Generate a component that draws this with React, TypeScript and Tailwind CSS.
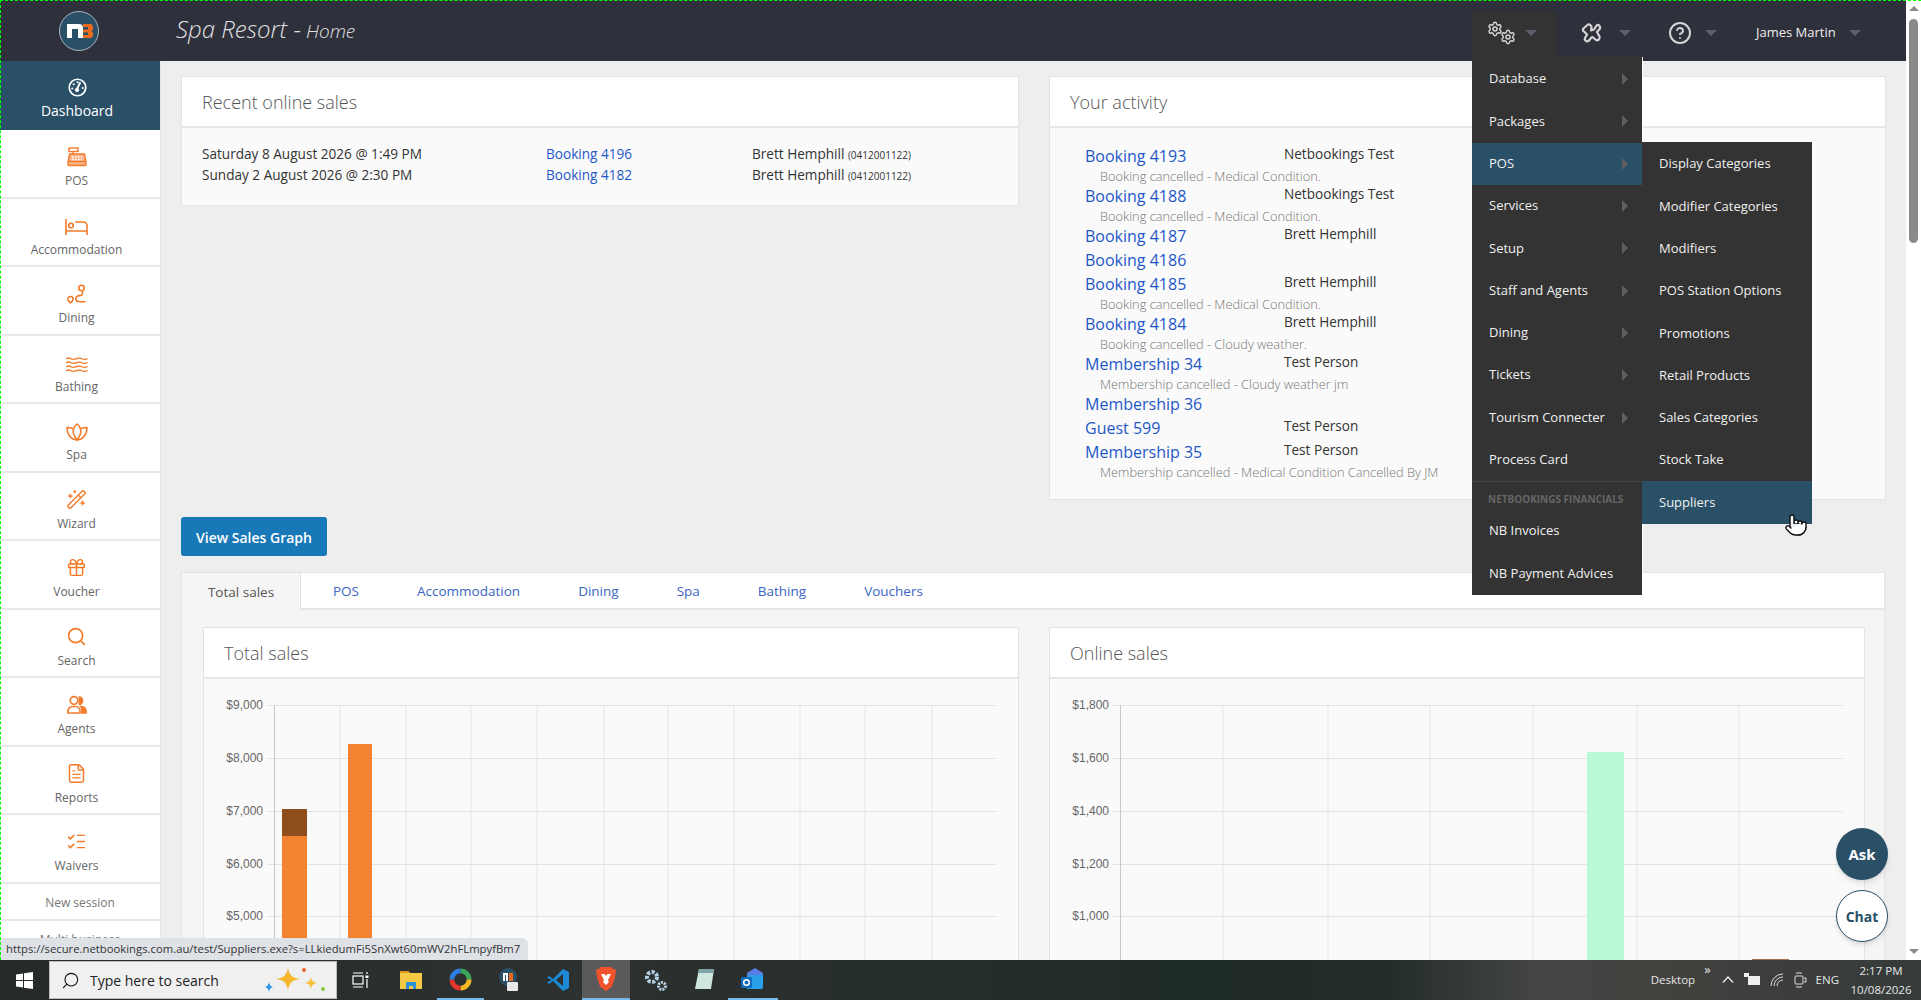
import { CircleHelp, FileText, Gift, ListChecks, Pointer, Search, Settings, WandSparkles } from 'lucide-react';
import type { ReactNode } from 'react';

const ORANGE = '#f47b2a';

const RegisterIcon = () => (
  <svg width="20" height="20" viewBox="0 0 20 20" fill="none" stroke={ORANGE} strokeWidth="1.4">
    <rect x="2" y="1" width="9" height="3.5" />
    <path d="M6 4.5V7" />
    <path d="M2.5 7h15l1.500 8v2.500a1 1 0 0 1-1 1H2a1 1 0 0 1-1-1V15z" fill="#fbb58a" />
    <path d="M1 14.500h18" />
    <path d="M5 10h10M5 12.500h10" strokeDasharray="1.500 1.500" stroke="#fff" />
  </svg>
);

const BedIcon = () => (
  <svg width="23" height="18" viewBox="0 0 23 18" fill="none" stroke={ORANGE} strokeWidth="1.600">
    <path d="M1 1v16M1 13h21M22 17V7.500A3.500 3.500 0 0 0 18.500 4H10" />
    <circle cx="6" cy="7.500" r="2.300" />
  </svg>
);

const BathIcon = () => (
  <svg width="22" height="16" viewBox="0 0 22 16" fill="none" stroke={ORANGE} strokeWidth="1.300">
    <path d="M0 2c2.700-2 3.500-1 5.500 0s3.500 0 5.500-.5 3.500-.5 5.500.5 3.500 0 5-.5" />
    <path d="M0 6c2.700-2 3.500-1 5.500 0s3.500 0 5.500-.5 3.500-.5 5.500.5 3.500 0 5-.5" />
    <path d="M0 10c2.700-2 3.500-1 5.500 0s3.500 0 5.500-.5 3.500-.5 5.500.5 3.500 0 5-.5" />
    <path d="M0 14c2.700-2 3.500-1 5.500 0s3.500 0 5.500-.5 3.500-.5 5.500.5 3.500 0 5-.5" />
  </svg>
);

const DiningIcon = () => (
  <svg width="20" height="20" viewBox="0 0 20 20" fill="none" stroke={ORANGE} strokeWidth="1.600">
    <circle cx="14.500" cy="4" r="2.700" />
    <path d="M3.500 12.500a2.700 2.700 0 0 1 2.700 2.700c0 1.200-1.500 2.600-2.700 3.600-1.200-1-2.700-2.400-2.700-3.600a2.700 2.700 0 0 1 2.700-2.700z" />
    <path d="M15 7.500c1 1.500.5 3.700-1.500 3.900-2 .2-5 1-4.700 3.500.2 1.800 1.700 2.800 3.700 2.800h6" />
  </svg>
);

const LotusIcon = () => (
  <svg width="22" height="18" viewBox="0 0 22 18" fill="none" stroke={ORANGE} strokeWidth="1.600" strokeLinejoin="round">
    <path d="M11 1c2.500 2.200 3.800 4.500 3.800 7.500 0 3-1.800 5.500-3.800 8.500-2-3-3.800-5.500-3.800-8.500C7.200 5.500 8.500 3.200 11 1z" />
    <path d="M7.400 5.700C5.200 4.800 3 4.400 1 4.500c0 6 3 12 10 12.500" />
    <path d="M14.600 5.700c2.200-.9 4.400-1.300 6.400-1.200 0 6-3 12-10 12.500" />
  </svg>
);

const AgentsIcon = () => (
  <svg width="20" height="20" viewBox="0 0 20 20" fill="none" stroke={ORANGE} strokeWidth="1.700">
    <circle cx="7" cy="5.500" r="3.800" />
    <path d="M12.500 2a3.800 3.800 0 0 1 0 7.400z" fill={ORANGE} />
    <path d="M1 18v-2a4.500 4.500 0 0 1 4.500-4.500h3A4.500 4.500 0 0 1 13 16v2z" />
    <path d="M14 11.500h.5A4.500 4.500 0 0 1 19 16v2h-4v-2.500c0-1.500-.5-2.800-1-4z" fill={ORANGE} />
  </svg>
);

const DashIcon = () => (
  <svg width="19" height="19" viewBox="0 0 20 20" fill="none" stroke="#fff">
    <circle cx="10" cy="10" r="8.700" strokeWidth="1.800" />
    <path d="M9 12.500 13 4.500" strokeWidth="2" />
    <circle cx="9.500" cy="12.500" r="1.800" fill="#fff" />
    <g fill="#fff" stroke="none">
      <circle cx="4.500" cy="11" r="1.100" />
      <circle cx="6" cy="6.500" r="1.100" />
      <circle cx="10" cy="4.500" r="1.100" />
      <circle cx="15.500" cy="10.500" r="1.100" />
    </g>
  </svg>
);

// four lobed cross next to the settings gears
const ToolsIcon = () => (
  <svg width="22" height="22" viewBox="0 0 22 22" fill="none" stroke="#d4d4d4" strokeWidth="2.200" strokeLinejoin="round">
    <path d="M3 6 7 2.500c1.500-.8 4 1.500 3.500 3.500l-.5 2.500 3-1 3-4.500c1.500-.5 3.500 1 3 3.500l-3 3.500 2.500 4.500c.8 2-1.300 4.500-3.500 3.500l-3.500-3-1 .5-3 3.500c-2 1-4.500-1-3.500-3l2-3.500-3-3C1.500 9 1.500 7 3 6z" />
  </svg>
);

const Logo = () => (
  <svg width="40" height="40" viewBox="0 0 40 40">
    <circle cx="20" cy="20" r="19.500" fill="#2a5068" stroke="#a9b4bb" />
    <path d="M8 13h12a4 4 0 0 1 4 4v10h-5V18h-6v9H8z" fill="#fff" />
    <path d="M24 13h7a3 3 0 0 1 3 3v2.500L32.500 20l1.500 1.500V24a3 3 0 0 1-3 3h-7v-3h5v-2.500h-5v-3h5V16h-5z" fill="#ea6a1f" />
  </svg>
);

const SIDE_ITEMS: { label: string; icon: ReactNode }[] = [
  { label: 'POS', icon: <RegisterIcon /> },
  { label: 'Accommodation', icon: <BedIcon /> },
  { label: 'Dining', icon: <DiningIcon /> },
  { label: 'Bathing', icon: <BathIcon /> },
  { label: 'Spa', icon: <LotusIcon /> },
  { label: 'Wizard', icon: <WandSparkles size={21} strokeWidth={1.6} color={ORANGE} /> },
  { label: 'Voucher', icon: <Gift size={21} strokeWidth={1.7} color={ORANGE} /> },
  { label: 'Search', icon: <Search size={21} strokeWidth={1.8} color={ORANGE} /> },
  { label: 'Agents', icon: <AgentsIcon /> },
  { label: 'Reports', icon: <FileText size={21} strokeWidth={1.7} color={ORANGE} /> },
  { label: 'Waivers', icon: <ListChecks size={21} strokeWidth={1.7} color={ORANGE} /> },
];

const MAIN_MENU = ['Database', 'Packages', 'POS', 'Services', 'Setup', 'Staff and Agents', 'Dining', 'Tickets', 'Tourism Connecter', 'Process Card'];
const SUB_MENU = ['Display Categories', 'Modifier Categories', 'Modifiers', 'POS Station Options', 'Promotions', 'Retail Products', 'Sales Categories', 'Stock Take', 'Suppliers'];

const ACTIVITY: { link: string; name?: string; note?: string }[] = [
  { link: 'Booking 4193', name: 'Netbookings Test', note: 'Booking cancelled - Medical Condition.' },
  { link: 'Booking 4188', name: 'Netbookings Test', note: 'Booking cancelled - Medical Condition.' },
  { link: 'Booking 4187', name: 'Brett Hemphill' },
  { link: 'Booking 4186' },
  { link: 'Booking 4185', name: 'Brett Hemphill', note: 'Booking cancelled - Medical Condition.' },
  { link: 'Booking 4184', name: 'Brett Hemphill', note: 'Booking cancelled - Cloudy weather.' },
  { link: 'Membership 34', name: 'Test Person', note: 'Membership cancelled - Cloudy weather jm' },
  { link: 'Membership 36' },
  { link: 'Guest 599', name: 'Test Person' },
  { link: 'Membership 35', name: 'Test Person', note: 'Membership cancelled - Medical Condition Cancelled By JM' },
];

const SALES = [
  { when: 'Saturday 8 August 2026 @ 1:49 PM', link: 'Booking 4196' },
  { when: 'Sunday 2 August 2026 @ 2:30 PM', link: 'Booking 4182' },
];

const TABS = ['POS', 'Accommodation', 'Dining', 'Spa', 'Bathing', 'Vouchers'];

const Caret = () => (
  <span className="inline-block w-0 h-0 border-x-[6px] border-x-transparent border-t-[6px] border-t-[#5c5e68]" />
);

const MenuRow = ({ label, active, arrow }: { label: string; active?: boolean; arrow?: boolean }) => (
  <div className={`h-[42.3px] flex items-center justify-between pl-[17px] pr-[14px] text-[13px] text-[#f0f0f0] ${active ? 'bg-[#2a5068]' : ''}`}>
    <span>{label}</span>
    {arrow && <span className="w-0 h-0 border-y-[6px] border-y-transparent border-l-[6px] border-l-[#5e5e5e]" />}
  </div>
);

const Card = ({ title, children }: { title: string; children: ReactNode }) => (
  <div className="border border-[#e3e3e3] bg-[#fafafa]">
    <div className="h-[51px] bg-white border-b-2 border-[#e6e6e6] pl-5 pt-[2px] flex items-center text-[18px] font-light text-[#555]">{title}</div>
    {children}
  </div>
);

const Chart = ({ viewBox, axis, verticals, right, ticks, children }: {
  viewBox: string; axis: number; verticals: number[]; right: number; ticks: { y: number; label: string }[]; children: ReactNode;
}) => (
  <svg width={814} height={281} viewBox={viewBox} className="block">
    {verticals.map((x) => <line key={x} x1={x} x2={x} y1={705} y2={960} stroke="#e6e6e6" />)}
    {ticks.map((t) => (
      <g key={t.y}>
        <line x1={axis - 7} x2={right} y1={t.y + 0.5} y2={t.y + 0.5} stroke="#e2e2e2" />
        <text x={axis - 11} y={t.y + 4} textAnchor="end" fontSize="12" fill="#666" fontFamily="'Liberation Sans', sans-serif">{t.label}</text>
      </g>
    ))}
    <line x1={axis + 0.5} x2={axis + 0.5} y1={705} y2={960} stroke="#c8c8c8" />
    {children}
  </svg>
);

const WindowsLogo = () => (
  <svg width="17" height="17" viewBox="0 0 17 17" fill="#fff">
    <path d="M0 2.400 7 1.400V8H0zM8 1.300 17 0v8H8zM0 9h7v6.600l-7-1zM8 9h9v8l-9-1.300z" />
  </svg>
);

const Sparkle = () => (
  <svg width="64" height="36" viewBox="0 0 64 36">
    <path d="M25 6c1.500 7 4 10 12 11-8 1-10.500 4-12 11-1.500-7-4-10-12-11 8-1 10.500-4 12-11z" fill="#f7b62b" />
    <path d="M48 15c.7 3.500 1.800 5 6 6-4.200 1-5.300 2.500-6 6-.7-3.500-1.800-5-6-6 4.200-1 5.300-2.500 6-6z" fill="#f7c23b" />
    <circle cx="41" cy="8" r="2" fill="#e8632c" />
    <circle cx="60" cy="27" r="2" fill="#8cc63f" />
    <path d="M6 20c.5 2.500 1.200 4 4 5-2.800 1-3.500 2.500-4 5-.5-2.500-1.200-4-4-5 2.800-1 3.500-2.500 4-5z" fill="#2e9be6" />
  </svg>
);

const TaskIcons = () => (
  <div className="flex items-center">
    <div className="w-[48px] flex justify-center">
      <svg width="18" height="18" viewBox="0 0 18 18" fill="none" stroke="#fff" strokeWidth="1.200">
        <rect x="1" y="5" width="10" height="8" />
        <path d="M1 2h10M1 16h10M15 1v2M15 8v9" />
        <rect x="13.500" y="4.500" width="3" height="2.500" fill="#fff" stroke="none" />
      </svg>
    </div>
    <div className="w-[52px] flex justify-center">
      <svg width="22" height="20" viewBox="0 0 22 20">
        <path d="M0 1h8l2 2h12v16H0z" fill="#f6c945" />
        <path d="M0 1h8l2 2H0z" fill="#d99a1e" />
        <path d="M6 19v-7h10v7h-3v-3H9v3z" fill="#2d8fd8" />
      </svg>
    </div>
    <div className="w-[47px] flex justify-center border-b-2 border-[#76b9ed] h-[40px] items-center">
      <svg width="23" height="23" viewBox="0 0 24 24" fill="none" strokeWidth="5">
        <path d="M12 3a9 9 0 0 1 9 9" stroke="#3ba55d" />
        <path d="M21 12a9 9 0 0 1-9 9" stroke="#f5b921" />
        <path d="M12 21a9 9 0 0 1-9-9" stroke="#e3352b" />
        <path d="M3 12a9 9 0 0 1 9-9" stroke="#2f7de1" />
      </svg>
    </div>
    <div className="w-[50px] flex justify-center">
      <svg width="20" height="24" viewBox="0 0 20 24">
        <circle cx="9" cy="9" r="9" fill="#2a5068" />
        <path d="M4 5h5v8H7V7H6v6H4z" fill="#fff" />
        <path d="M10 5h4v8h-4z" fill="#ea6a1f" />
        <rect x="8" y="14" width="11" height="9" rx="1" fill="#e8e8e8" />
      </svg>
    </div>
    <div className="w-[48px] flex justify-center">
      <svg width="24" height="24" viewBox="0 0 24 24">
        <path d="M17 1 23 4v16l-6 3L7 13l-4 3-2-1.500L5.500 12 1 9.500 3 8l4 3z" fill="#1c8ad6" />
        <path d="M17 6v12l-7-6z" fill="#2c2f2e" />
      </svg>
    </div>
    <div className="w-[48px] h-[40px] bg-[#5a5a5a] flex justify-center items-center border-b-2 border-[#76b9ed]">
      <svg width="20" height="24" viewBox="0 0 20 24">
        <path d="M5 0h10l2 2 3 .5-1 8-3 9-6 4.500-6-4.500-3-9-1-8L3 2z" fill="#f0532b" />
        <path d="M5 7h3.500L10 9l1.500-2H15l-3 6 1 2-3 3-3-3 1-2z" fill="#fff" />
      </svg>
    </div>
    <div className="w-[50px] flex justify-center">
      <svg width="26" height="24" viewBox="0 0 26 24">
        <g fill="none" stroke="#b4d0e4">
          <circle cx="10" cy="9" r="5" strokeWidth="4" strokeDasharray="3 1.500" />
          <circle cx="20" cy="18" r="3.500" strokeWidth="3" strokeDasharray="2 1" />
        </g>
      </svg>
    </div>
    <div className="w-[48px] flex justify-center">
      <svg width="22" height="24" viewBox="0 0 22 24">
        <path d="M6 1h15l-3 20H2z" fill="#cfe5e0" />
        <path d="M6 1h15l-.6 4H5.200z" fill="#7da4a6" />
      </svg>
    </div>
    <div className="w-[50px] h-[40px] flex justify-center items-center border-b-2 border-[#76b9ed]">
      <svg width="24" height="24" viewBox="0 0 24 24">
        <path d="M6 6 14 1l8 5v12H6z" fill="#5a7de8" />
        <path d="M6 8h16v12a2 2 0 0 1-2 2H6z" fill="#2aa0e8" />
        <rect x="0" y="10" width="11" height="11" rx="1.500" fill="#0f6cbd" />
        <circle cx="5.500" cy="15.500" r="2.800" fill="none" stroke="#fff" strokeWidth="1.500" />
      </svg>
    </div>
  </div>
);

const App = () => (
  <div className="relative w-full h-[1000px] overflow-hidden flex flex-col bg-[#eee] text-[#333]" style={{ fontFamily: "'Open Sans', sans-serif" }}>
    {/* capture marquee along the top and left edge */}
    <div className="absolute inset-0 z-50 pointer-events-none border-t border-l border-dashed border-[#00ff00] h-[960px]" />

    <div className="relative h-[960px] flex shrink-0">
      <div className="flex-1 min-w-0 flex flex-col">
        {/* top bar */}
        <header className="relative z-20 h-[61px] shrink-0 bg-[#2e303c] flex items-center">
          <div className="w-[160px] flex justify-center pr-[2px]"><Logo /></div>
          <div className="ml-4 italic font-light text-[#e0e0e0] flex items-baseline gap-[5px] mt-[-3px]">
            <span className="text-[24px]">Spa Resort -</span>
            <span className="text-[19px]">Home</span>
          </div>
          <div className="ml-auto mr-[40px] flex items-end self-stretch">
            <div className="relative w-[84px] h-[50px] bg-[#333] flex items-center pl-[15px] pb-[6px] gap-[8px]">
              <svg width="30" height="24" viewBox="0 0 30 24" color="#d4d4d4">
                <Settings x={0} y={0} width={16} height={16} strokeWidth={2.2} />
                <Settings x={13} y={8} width={16} height={16} strokeWidth={2.2} />
              </svg>
              <Caret />

              {/* open settings menu */}
              <div className="absolute left-0 top-[46px] w-[171px] h-[538px] bg-[#333] border-r border-white pt-px">
                {MAIN_MENU.map((label, i) => (
                  <MenuRow key={label} label={label} active={label === 'POS'} arrow={i < 9} />
                ))}
                <div className="h-[29px] border-t border-[#444] pl-4 pt-[10px] text-[10px] leading-[14px] font-bold text-[#666]">NETBOOKINGS FINANCIALS</div>
                <MenuRow label="NB Invoices" />
                <MenuRow label="NB Payment Advices" />
                <div className="absolute left-[170px] top-[85px] w-[170px] bg-[#333] pt-px">
                  {SUB_MENU.map((label) => (
                    <MenuRow key={label} label={label} active={label === 'Suppliers'} />
                  ))}
                  <Pointer size={24} strokeWidth={1.4} fill="#fff" color="#111" className="absolute left-[142px] top-[371px]" />
                </div>
              </div>
            </div>
            <div className="w-[85px] h-[50px] flex items-center pl-[25px] pb-[6px] gap-[16px]">
              <ToolsIcon />
              <Caret />
            </div>
            <div className="w-[100px] h-[50px] flex items-center pl-[27px] pb-[6px] gap-[13px]">
              <CircleHelp size={24} strokeWidth={2} color="#d4d4d4" />
              <Caret />
            </div>
            <div className="w-[125px] h-[50px] flex items-center pl-[15px] pb-[6px] gap-[13px] text-[13px] text-[#eee]">
              <span className="font-medium">James Martin</span>
              <Caret />
            </div>
          </div>
        </header>

        <div className="flex-1 min-h-0 flex">
          {/* left nav */}
          <nav className="w-[161px] shrink-0 bg-white border-r border-[#e6e2e6] overflow-hidden">
            <div className="h-[69px] bg-[#2a5068] text-white text-[14px] flex flex-col items-center pt-[17px] gap-[3px] pr-[6px]">
              <DashIcon />
              <span>Dashboard</span>
            </div>
            {SIDE_ITEMS.map((item) => (
              <div key={item.label} className="h-[68.55px] border-b-2 border-[#ebe8eb] flex flex-col items-center pr-[7px] text-[12px] text-[#666]">
                <div className="h-[40px] flex items-end justify-center pb-[3px]">{item.icon}</div>
                <span className="mt-[2px]">{item.label}</span>
              </div>
            ))}
            <div className="h-[37px] border-b-2 border-[#ebe8eb] pt-[2px] flex items-center justify-center text-[12px] text-[#777]">New session</div>
            <div className="h-[37px] flex items-center justify-center text-[12px] text-[#777]">Multi business</div>
          </nav>

          {/* page content */}
          <main className="flex-1 min-w-0 overflow-hidden pt-[15px] pl-[20px] pr-[21px]">
            <div className="grid grid-cols-[838px_837px] gap-x-[30px] items-start">
              <Card title="Recent online sales">
                <div className="pt-[15px] pb-5 pl-5 text-[13.6px]">
                  {SALES.map((s) => (
                    <div key={s.link} className="flex h-[21px] leading-[21px]">
                      <span className="w-[344px]">{s.when}</span>
                      <span className="w-[206px] text-[#1e58c8]">{s.link}</span>
                      <span>Brett Hemphill <span className="text-[10px]">(0412001122)</span></span>
                    </div>
                  ))}
                </div>
              </Card>
              <Card title="Your activity">
                <div className="pt-4 pb-[19px] pl-[35px]">
                  {ACTIVITY.map((a) => (
                    <div key={a.link}>
                      <div className="h-6 flex">
                        <span className="w-[199px] text-[16px] leading-6 text-[#1e58c8]">{a.link}</span>
                        {a.name && <span className="text-[13.6px] leading-5">{a.name}</span>}
                      </div>
                      {a.note && <div className="h-4 pl-[15px] text-[12.8px] leading-4 font-light text-[#777]">{a.note}</div>}
                    </div>
                  ))}
                </div>
              </Card>
            </div>

            <button className="mt-[17px] pt-[2px] block w-[146px] h-[39px] rounded-[3px] bg-[#1878b8] text-white text-[14px] font-semibold">View Sales Graph</button>

            <div className="mt-4 border border-[#e3e3e3] bg-[#f5f5f5]">
              <div className="h-[37px] flex bg-white border-b-2 border-[#e6e6e6] text-[13.5px]">
                <div className="w-[119px] h-[37px] pt-[2px] mr-[3px] flex items-center justify-center bg-[#f5f5f5] border-r border-[#e0e0e0] text-[#555]">Total sales</div>
                {TABS.map((t) => (
                  <div key={t} className="px-[29px] h-[37px] flex items-center text-[#3a65c4]">{t}</div>
                ))}
              </div>
              <div className="pt-[17px] pl-[21px] pr-[21px] grid grid-cols-[816px_816px] gap-x-[30px]">
                <Card title="Total sales">
                  <Chart
                    viewBox="204 679 814 281"
                    axis={274}
                    right={996}
                    verticals={[340, 406, 471, 537, 604, 668, 734, 800, 865, 932]}
                    ticks={[{ y: 705, label: '$9,000' }, { y: 758, label: '$8,000' }, { y: 811, label: '$7,000' }, { y: 864, label: '$6,000' }, { y: 916, label: '$5,000' }]}
                  >
                    <rect x="282" y="809" width="25" height="27" fill="#8e4d1b" />
                    <rect x="282" y="836" width="25" height="124" fill="#f28330" />
                    <rect x="348" y="744" width="24" height="216" fill="#f28330" />
                  </Chart>
                </Card>
                <Card title="Online sales">
                  <Chart
                    viewBox="1050 679 814 281"
                    axis={1120}
                    right={1843}
                    verticals={[1223, 1328, 1430, 1533, 1637, 1739]}
                    ticks={[{ y: 705, label: '$1,800' }, { y: 758, label: '$1,600' }, { y: 811, label: '$1,400' }, { y: 864, label: '$1,200' }, { y: 916, label: '$1,000' }]}
                  >
                    <rect x="1587" y="752" width="37" height="208" fill="#baf9d6" />
                    <rect x="1752" y="959" width="37" height="1" fill="#a07050" />
                  </Chart>
                </Card>
              </div>
            </div>
          </main>
        </div>
      </div>

      {/* browser scrollbar */}
      <div className="w-[15px] shrink-0 bg-white flex flex-col items-center relative z-20">
        <span className="mt-[6px] w-0 h-0 border-x-[5px] border-x-transparent border-b-[5px] border-b-[#8a8a8a]" />
        <div className="mt-[8px] w-[9px] h-[224px] rounded-[5px] bg-[#8a8a8a]" />
        <span className="mt-auto mb-[6px] w-0 h-0 border-x-[5px] border-x-transparent border-t-[5px] border-t-[#8a8a8a]" />
      </div>

      {/* link status bubble */}
      <div className="absolute left-0 bottom-0 z-30 h-[22px] w-[528px] bg-[#dee1e6] rounded-tr-md pl-[6px] flex items-center text-[11.3px] text-[#333] whitespace-nowrap">
        https://secure.netbookings.com.au/test/Suppliers.exe?s=LLkiedumFi5SnXwt60mWV2hFLmpyfBm7
      </div>

      {/* floating help buttons */}
      <div className="absolute right-[33px] top-[828px] z-30 flex flex-col gap-[10px]">
        <div className="w-[52px] h-[52px] rounded-full bg-[#2a5068] text-white font-bold text-[15px] flex items-center justify-center shadow-md">Ask</div>
        <div className="w-[52px] h-[52px] rounded-full bg-white border border-[#2a5068] text-[#2a5068] font-bold text-[14px] flex items-center justify-center shadow-md">Chat</div>
      </div>
    </div>

    {/* windows taskbar */}
    <footer className="relative z-40 h-[40px] shrink-0 flex items-center text-[#e6e6e6] bg-[linear-gradient(90deg,#262a2a_0%,#2d3130_30%,#1f2b29_62%,#222c2a_72%,#444545_80%,#43423f_86%,#353a3a_100%)]">
      <div className="w-[49px] flex justify-center"><WindowsLogo /></div>
      <div className="w-[288px] h-[38px] bg-[#f0f0f0] border border-[#bbb] flex items-center pl-[11px] text-[14px] text-[#222]">
        <Search size={19} strokeWidth={1.4} color="#111" className="-scale-x-100" />
        <span className="ml-[10px]">Type here to search</span>
        <div className="ml-auto mr-[9px]"><Sparkle /></div>
      </div>
      <TaskIcons />
      <div className="ml-auto flex items-center text-[11.5px] h-full">
        <span>Desktop</span>
        <span className="ml-[9px] mb-[22px] text-[13px] leading-none">»</span>
        <svg width="14" height="14" viewBox="0 0 14 14" fill="none" stroke="#eee" strokeWidth="1.300" className="ml-[10px]"><path d="M2 9.500 7 4l5 5.500" /></svg>
        <svg width="18" height="16" viewBox="0 0 18 16" className="ml-[8px]"><rect x="5" y="4" width="12" height="9" fill="#eee" /><path d="M1 1h5v4H1z" fill="#eee" /></svg>
        <svg width="16" height="16" viewBox="0 0 16 16" fill="none" stroke="#ddd" className="ml-[8px]"><path d="M2 14a12 12 0 0 1 12-12M5 14a9 9 0 0 1 9-9M8 14a6 6 0 0 1 6-6" /></svg>
        <svg width="14" height="18" viewBox="0 0 14 18" fill="none" stroke="#ddd" className="ml-[8px]"><rect x="2" y="5" width="8" height="8" rx="1" /><path d="M3 2h6M3 16h6M11 7h2v4h-2" /></svg>
        <span className="ml-[9px]">ENG</span>
        <div className="ml-[13px] mr-[11px] w-[58px] flex flex-col items-center leading-[19px]">
          <span>2:17 PM</span>
          <span>10/08/2026</span>
        </div>
      </div>
    </footer>
  </div>
);

export default App;
